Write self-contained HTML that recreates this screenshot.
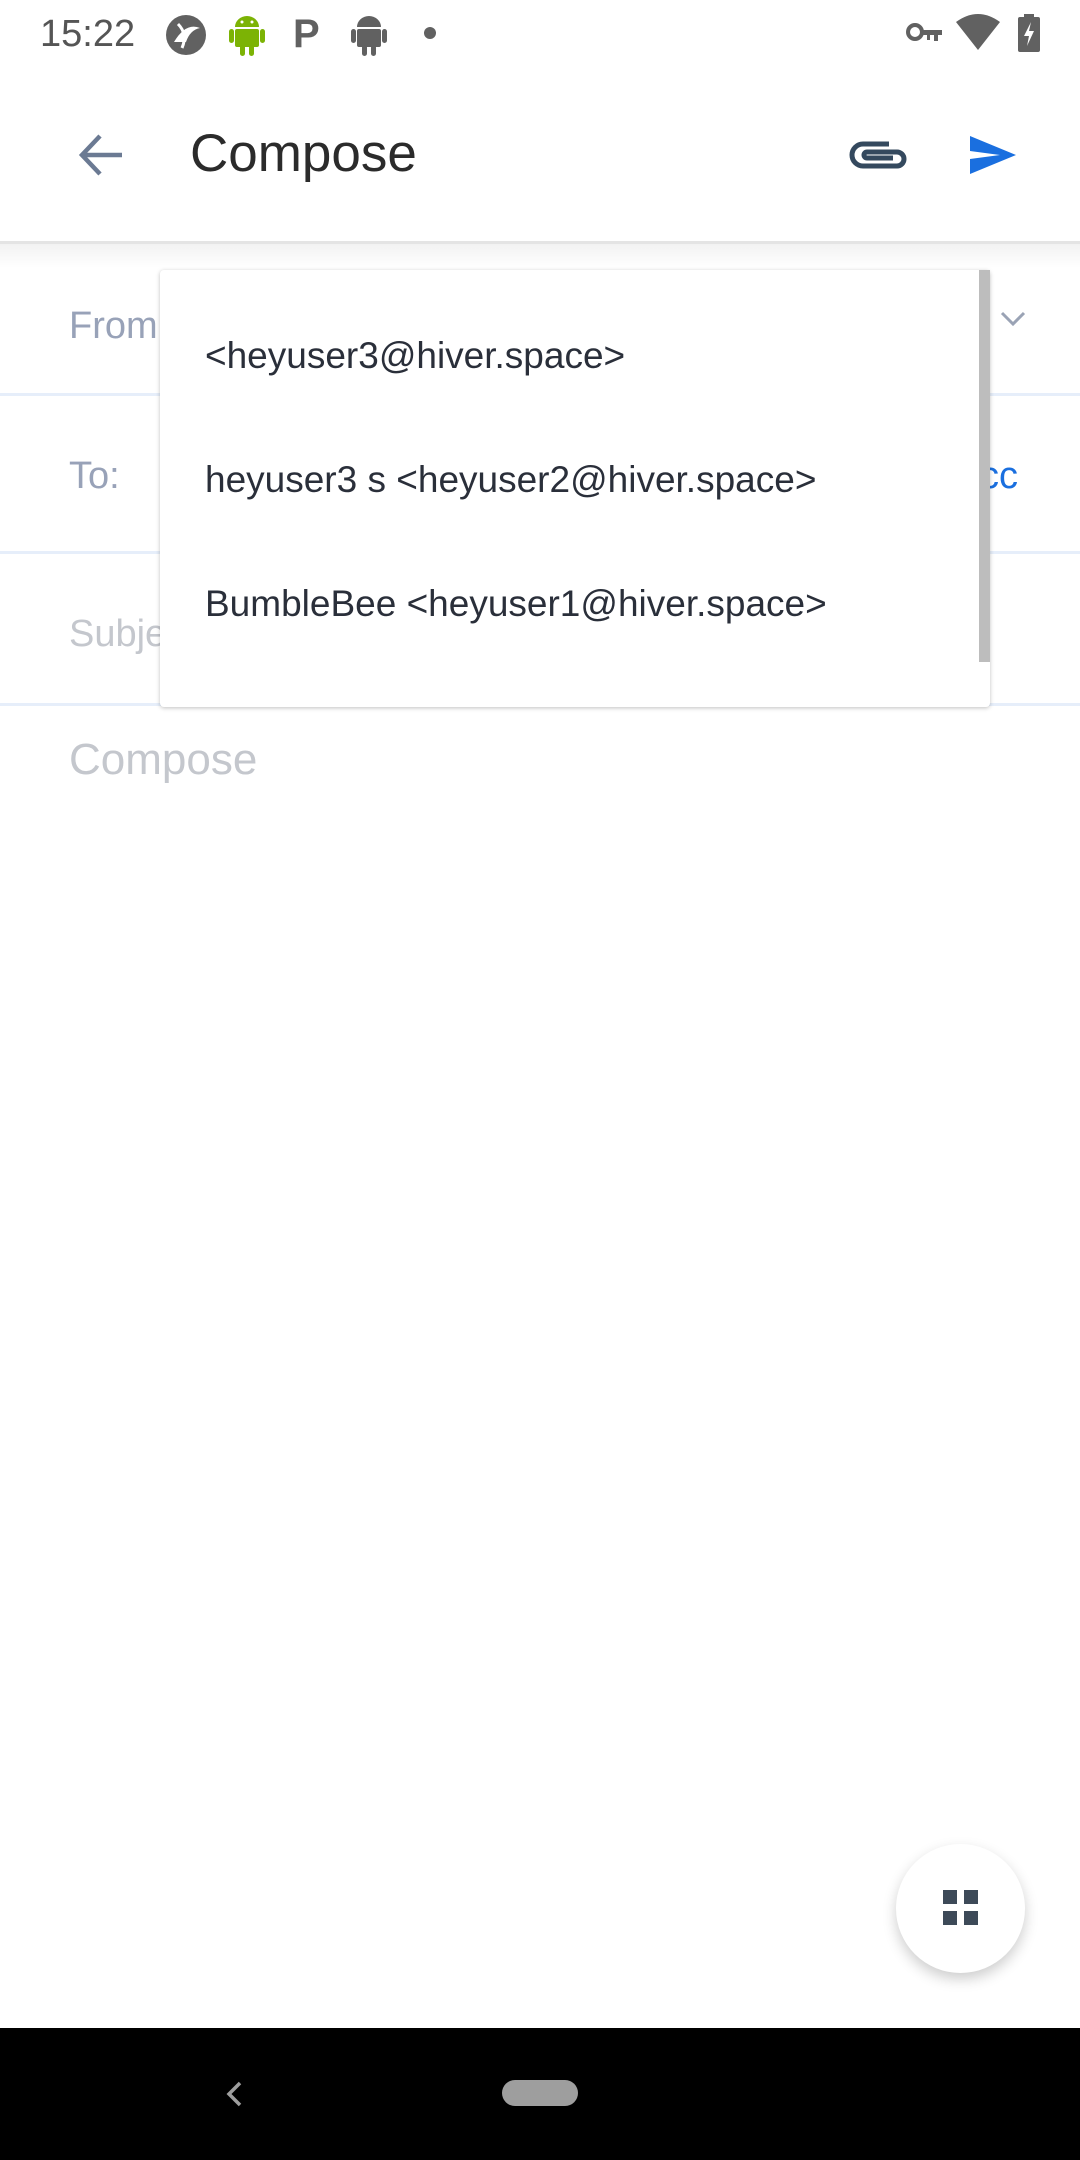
<!DOCTYPE html>
<html><head><meta charset="utf-8"><style>
*{margin:0;padding:0;box-sizing:border-box}
body{width:1080px;height:2160px;background:#fff;position:relative;overflow:hidden;font-family:"Liberation Sans",Roboto,sans-serif}
.abs{position:absolute}
.lbl{position:absolute;left:69px;font-size:38px;color:#98a2b8;line-height:40px}
.div{position:absolute;left:0;width:1080px;height:3px;background:#e6eefa}
.item{position:absolute;left:205px;font-size:37px;color:#2a2f3a;line-height:40px;white-space:nowrap}
</style></head><body>
<!-- status bar -->
<div class="abs" style="left:40px;top:14px;font-size:38px;color:#555;line-height:40px">15:22</div>
<svg class="abs" style="left:164px;top:12px" width="46" height="46" viewBox="0 0 46 46"><circle cx="22" cy="23" r="20" fill="#616161"/><path d="M10 30 Q22 10 36 16 Q26 18 22 30 Z" fill="#fff"/><path d="M14 12 Q24 22 18 36" stroke="#fff" stroke-width="3" fill="none"/></svg>
<svg class="abs" style="left:229px;top:13px" width="36" height="44" viewBox="0 0 36 44"><g fill="#7cb305"><path d="M6 14 a12 11 0 0 1 24 0z"/><rect x="6" y="16" width="24" height="18" rx="2"/><rect x="0" y="16" width="5" height="14" rx="2.5"/><rect x="31" y="16" width="5" height="14" rx="2.5"/><rect x="11" y="32" width="5" height="11" rx="2.5"/><rect x="20" y="32" width="5" height="11" rx="2.5"/></g><circle cx="13" cy="9" r="1.5" fill="#fff"/><circle cx="23" cy="9" r="1.5" fill="#fff"/></svg>
<div class="abs" style="left:293px;top:12px;font-size:40px;font-weight:bold;color:#616161;line-height:44px">P</div>
<svg class="abs" style="left:351px;top:13px" width="36" height="44" viewBox="0 0 36 44"><g fill="#616161"><path d="M6 14 a12 11 0 0 1 24 0z"/><rect x="6" y="16" width="24" height="18" rx="2"/><rect x="0" y="16" width="5" height="14" rx="2.5"/><rect x="31" y="16" width="5" height="14" rx="2.5"/><rect x="11" y="32" width="5" height="11" rx="2.5"/><rect x="20" y="32" width="5" height="11" rx="2.5"/></g></svg>
<div class="abs" style="left:424px;top:27px;width:12px;height:12px;border-radius:50%;background:#616161"></div>
<svg class="abs" style="left:906px;top:20px" width="38" height="26" viewBox="0 0 38 26"><circle cx="9" cy="12" r="7" fill="none" stroke="#616161" stroke-width="4"/><path d="M16 10h20v5h-4v6h-4v-6h-4v5h-3v-5h-5z" fill="#616161"/></svg>
<svg class="abs" style="left:956px;top:14px" width="44" height="36" viewBox="0 0 44 36"><path d="M0 8 Q22 -8 44 8 L22 36Z" fill="#616161"/></svg>
<svg class="abs" style="left:1018px;top:14px" width="22" height="38" viewBox="0 0 22 38"><rect x="6" y="0" width="10" height="4" fill="#616161"/><rect x="0" y="3" width="22" height="35" rx="2" fill="#616161"/><path d="M13 8 L6 22 H11 L9 32 L16 17 H11Z" fill="#fff"/></svg>
<!-- app bar -->
<svg class="abs" style="left:78px;top:130px" width="50" height="50" viewBox="0 0 50 50"><path d="M44 25H6M22 6L4 25L22 44" stroke="#6b7a93" stroke-width="4.5" fill="none"/></svg>
<div class="abs" style="left:190px;top:124px;font-size:53px;color:#2b2b2b;line-height:60px">Compose</div>
<svg class="abs" style="left:849px;top:136px" width="58" height="40" viewBox="0 0 58 40"><path d="M40 8H14a10 10 0 0 0 0 22h34a7 7 0 0 0 0-14H18a3 3 0 0 0 0 6h26" stroke="#34495e" stroke-width="5" fill="none"/></svg>
<svg class="abs" style="left:970px;top:136px" width="48" height="38" viewBox="0 0 48 38"><path d="M0 0L46 19L0 38L0 23L30 19L0 15Z" fill="#1a6fdf"/></svg>
<div class="abs" style="left:0;top:241px;width:1080px;height:3px;background:#e4e4e4"></div>
<div class="abs" style="left:0;top:244px;width:1080px;height:24px;background:linear-gradient(#f2f2f2,#fff)"></div>
<!-- form -->
<div class="lbl" style="top:306px">From</div>
<svg class="abs" style="left:1000px;top:310px" width="26" height="18" viewBox="0 0 26 18"><path d="M2 3L13 14L24 3" stroke="#9aa3b5" stroke-width="3" fill="none"/></svg>
<div class="div" style="top:393px"></div>
<div class="lbl" style="top:456px">To:</div>
<div class="abs" style="left:980px;top:456px;font-size:38px;color:#1a6fdf;line-height:40px">cc</div>
<div class="div" style="top:551px"></div>
<div class="lbl" style="top:614px;color:#c4c7cd">Subject</div>
<div class="div" style="top:703px"></div>
<div class="lbl" style="top:736px;font-size:44px;line-height:48px;color:#c4c7cd">Compose</div>
<!-- dropdown -->
<div class="abs" style="left:160px;top:270px;width:830px;height:437px;background:#fff;border-radius:4px;box-shadow:0 1px 4px rgba(0,0,0,.25)">
<div class="abs" style="right:0;top:0;width:11px;height:392px;background:#bdbdbd"></div>
</div>
<div class="item" style="top:336px">&lt;heyuser3@hiver.space&gt;</div>
<div class="item" style="top:460px">heyuser3 s &lt;heyuser2@hiver.space&gt;</div>
<div class="item" style="top:584px">BumbleBee &lt;heyuser1@hiver.space&gt;</div>
<!-- fab -->
<div class="abs" style="left:896px;top:1844px;width:129px;height:129px;border-radius:50%;background:#fff;box-shadow:0 6px 14px rgba(0,0,0,.2)"></div>
<div class="abs" style="left:943px;top:1890px;width:14px;height:14px;background:#3d4a58"></div>
<div class="abs" style="left:964px;top:1890px;width:14px;height:14px;background:#3d4a58"></div>
<div class="abs" style="left:943px;top:1911px;width:14px;height:14px;background:#3d4a58"></div>
<div class="abs" style="left:964px;top:1911px;width:14px;height:14px;background:#3d4a58"></div>
<!-- nav -->
<div class="abs" style="left:0;top:2028px;width:1080px;height:132px;background:#000"></div>
<svg class="abs" style="left:224px;top:2080px" width="20" height="28" viewBox="0 0 20 28"><path d="M16 3L5 14L16 25" stroke="#9e9e9e" stroke-width="3.5" fill="none"/></svg>
<div class="abs" style="left:502px;top:2080px;width:76px;height:26px;border-radius:13px;background:#9e9e9e"></div>
</body></html>
